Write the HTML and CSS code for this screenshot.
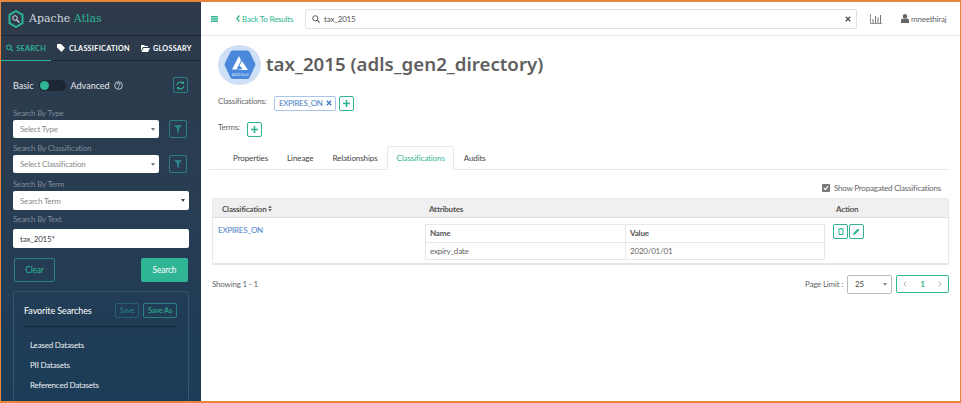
FILE: index.html
```html
<!DOCTYPE html>
<html lang="en">
<head>
    <meta charset="UTF-8">
    <title>Apache Atlas</title>
    <link rel="stylesheet" href="styles.css">
</head>
<body>
<div class="frame">
    <aside class="sidebar">
        <div class="brand">
            <svg class="brand-logo" width="16" height="18" viewBox="0 0 16 18">
                <path d="M8 1l6.500 3.800v8.400L8 17l-6.500-3.800V4.800z" fill="none" stroke="#2fb494" stroke-width="2"/>
                <circle cx="7" cy="8" r="2.300" fill="none" stroke="#d5e0e0" stroke-width="1"/>
                <path d="M8.500 10l3 2.500" stroke="#d5e0e0" stroke-width="1.200"/>
            </svg>
            <span class="brand-name">Apache <b>Atlas</b></span>
        </div>
        <nav class="side-tabs">
            <span class="side-tab active">
                <svg width="8" height="8" viewBox="0 0 8 8"><circle cx="3.300" cy="3.300" r="2.500" fill="none" stroke="#2fb494" stroke-width="1.100"/><path d="M5.200 5.200L7.600 7.600" stroke="#2fb494" stroke-width="1.200"/></svg>
                SEARCH
            </span>
            <span class="side-tab">
                <svg width="9" height="8" viewBox="0 0 9 8"><path d="M0 0h4l4 4-3.500 4L0 3.500z" fill="#fff"/></svg>
                CLASSIFICATION
            </span>
            <span class="side-tab">
                <svg width="9" height="8" viewBox="0 0 9 8"><path d="M0 1h3l1 1h3v1H2L0 7z M2.500 4H9L7 8H0.500z" fill="#fff"/></svg>
                GLOSSARY
            </span>
        </nav>

        <div class="side-body">
            <div class="mode-row">
                <span>Basic</span>
                <span class="switch"><span class="knob"></span></span>
                <span>Advanced</span>
                <svg width="9" height="9" viewBox="0 0 9 9"><circle cx="4.500" cy="4.500" r="3.800" fill="none" stroke="#e4e9ee" stroke-width="0.800"/><path d="M3.200 3.500a1.300 1.300 0 1 1 1.800 1.200c-.4.200-.5.400-.5.800" fill="none" stroke="#e4e9ee" stroke-width="0.800"/><circle cx="4.500" cy="6.700" r=".5" fill="#e4e9ee"/></svg>
                <button class="icon-btn refresh">
                    <svg width="9" height="9" viewBox="0 0 9 9"><path d="M1 4a3.500 3.500 0 0 1 6-1.800M8 5a3.500 3.500 0 0 1-6 1.800" fill="none" stroke="#2fb494" stroke-width="1.200"/><path d="M8 .6v2.400H5.600zM1 8.400V6h2.400z" fill="#2fb494"/></svg>
                </button>
            </div>

            <label class="field-label first">Search By Type</label>
            <div class="field-row">
                <div class="select short">Select Type<span class="caret"></span></div>
                <button class="icon-btn filter"><svg width="8" height="8" viewBox="0 0 8 8"><path d="M0 0h8L5 4v4L3 7V4z" fill="#2a7f85"/></svg></button>
            </div>

            <label class="field-label">Search By Classification</label>
            <div class="field-row">
                <div class="select short">Select Classification<span class="caret"></span></div>
                <button class="icon-btn filter"><svg width="8" height="8" viewBox="0 0 8 8"><path d="M0 0h8L5 4v4L3 7V4z" fill="#2a7f85"/></svg></button>
            </div>

            <label class="field-label term-label">Search By Term</label>
            <div class="select">Search Term<span class="caret dark"></span></div>

            <label class="field-label text-label">Search By Text</label>
            <div class="select filled">tax_2015*</div>

            <div class="action-row">
                <button class="btn-clear">Clear</button>
                <button class="btn-search">Search</button>
            </div>

            <section class="favorites">
                <div class="fav-head">
                    <span class="fav-title">Favorite Searches</span>
                    <button class="fav-btn dim">Save</button>
                    <button class="fav-btn wide">Save As</button>
                </div>
                <ul class="fav-list">
                    <li>Leased Datasets</li>
                    <li>PII Datasets</li>
                    <li>Referenced Datasets</li>
                </ul>
            </section>
        </div>
    </aside>

    <main class="content">
        <header class="topbar">
            <svg class="burger" width="7" height="6" viewBox="0 0 7 6"><path d="M0 0h7v1.400H0zM0 2.300h7v1.400H0zM0 4.600h7V6H0z" fill="#2fb494"/></svg>
            <a class="back">
                <svg width="4" height="7" viewBox="0 0 4 7"><path d="M3.500 .5L.8 3.500l2.700 3" fill="none" stroke="#2fb494" stroke-width="1.300"/></svg>
                Back To Results
            </a>
            <div class="global-search">
                <svg width="8" height="8" viewBox="0 0 8 8"><circle cx="3.300" cy="3.300" r="2.600" fill="none" stroke="#555" stroke-width="1"/><path d="M5.200 5.200L7.600 7.600" stroke="#555" stroke-width="1.100"/></svg>
                <span class="query">tax_2015</span>
                <svg width="6" height="6" viewBox="0 0 6 6"><path d="M.8.800l4.400 4.400M5.200.800L.8 5.200" stroke="#555" stroke-width="1.500"/></svg>
            </div>
            <svg class="chart" width="12" height="10" viewBox="0 0 12 10"><path d="M.5 0v9.500H12" fill="none" stroke="#777" stroke-width=".8"/><path d="M2.500 5h1v4h-1zM5 2h1v7H5zM7.500 3.500h1V9h-1zM10 1h1v8h-1z" fill="#777"/></svg>
            <span class="user">
                <svg width="8" height="9" viewBox="0 0 8 9"><circle cx="4" cy="2.200" r="2.200" fill="#666"/><path d="M0 9V6.500C0 5 1.300 4.500 2.300 4.500h3.400C6.700 4.500 8 5 8 6.500V9z" fill="#666"/></svg>
                mneethiraj
            </span>
        </header>

        <div class="detail">
            <div class="title-row">
                <span class="entity-icon">
                    <svg width="32" height="32" viewBox="0 0 32 32">
                        <path d="M9 1.500h14a3 3 0 0 1 2.600 1.500l5.400 11a3 3 0 0 1 0 3l-5.400 11.500a3 3 0 0 1-2.600 1.500H9a3 3 0 0 1-2.600-1.500L1 17a3 3 0 0 1 0-3L6.400 3A3 3 0 0 1 9 1.500z" fill="#4a88dc"/>
                        <path d="M15 7l-7 13.500h4.500L17 11.500zM18 12l-2.500 4.500 3 3.500-6 1H24z" fill="#fff"/>
                        <text x="16" y="27" font-size="3.600" fill="#dfeafa" text-anchor="middle">ADLS Gen2</text>
                    </svg>
                </span>
                <h1>tax_2015 (adls_gen2_directory)</h1>
            </div>

            <div class="meta-row classifications">
                <span class="meta-label">Classifications:</span>
                <span class="tag">EXPIRES_ON
                    <svg width="6" height="6" viewBox="0 0 6 6"><path d="M.8.800l4.400 4.400M5.200.800L.8 5.200" stroke="#4a80c4" stroke-width="1.500"/></svg>
                </span>
                <button class="plus"><svg width="7" height="7" viewBox="0 0 7 7"><path d="M2.700 0h1.600v2.700H7v1.600H4.300V7H2.700V4.300H0V2.700h2.700z" fill="#2fb494"/></svg></button>
            </div>
            <div class="meta-row terms">
                <span class="meta-label">Terms:</span>
                <button class="plus"><svg width="7" height="7" viewBox="0 0 7 7"><path d="M2.700 0h1.600v2.700H7v1.600H4.300V7H2.700V4.300H0V2.700h2.700z" fill="#2fb494"/></svg></button>
            </div>

            <div class="tabs">
                <span class="tab">Properties</span>
                <span class="tab">Lineage</span>
                <span class="tab">Relationships</span>
                <span class="tab active">Classifications</span>
                <span class="tab">Audits</span>
            </div>

            <div class="propagated">
                <span class="check"><svg width="6" height="6" viewBox="0 0 6 6"><path d="M.8 3l1.600 1.700L5.200 1.200" fill="none" stroke="#fff" stroke-width="1.200"/></svg></span>
                Show Propagated Classifications
            </div>

            <div class="panel">
                <div class="panel-head">
                    <span class="col-name">Classification
                        <svg width="4" height="7" viewBox="0 0 4 7"><path d="M2 .5L3.800 3H.2zM2 6.500L.2 4h3.600z" fill="#666"/></svg>
                    </span>
                    <span class="col-attr">Attributes</span>
                    <span class="col-action">Action</span>
                </div>
                <div class="panel-body">
                    <a class="link">EXPIRES_ON</a>
                    <table class="attrs">
                        <tr><th>Name</th><th>Value</th></tr>
                        <tr><td>expiry_date</td><td>2020/01/01</td></tr>
                    </table>
                    <div class="row-actions">
                        <button class="plus small"><svg width="6" height="7" viewBox="0 0 6 7"><path d="M0 1h6M1 1.500v5h4v-5M2.200 1V.3h1.600V1" fill="none" stroke="#2fb494" stroke-width="1"/></svg></button>
                        <button class="plus small"><svg width="7" height="7" viewBox="0 0 7 7"><path d="M0 7l.5-2L5 .5 6.500 2 2 6.500z" fill="#2fb494"/></svg></button>
                    </div>
                </div>
            </div>

            <div class="footer-row">
                <span class="showing">Showing 1 - 1</span>
                <span class="limit-label">Page Limit :</span>
                <div class="limit">25<span class="caret gray"></span></div>
                <div class="pager">
                    <svg width="4" height="6" viewBox="0 0 4 6"><path d="M3 .5L1 3l2 2.500" fill="none" stroke="#999" stroke-width=".8"/></svg>
                    <b>1</b>
                    <svg width="4" height="6" viewBox="0 0 4 6"><path d="M1 .5L3 3 1 5.500" fill="none" stroke="#999" stroke-width=".8"/></svg>
                </div>
            </div>
        </div>
    </main>
</div>
</body>
</html>
```

FILE: styles.css
```css
* {
    box-sizing: border-box;
}
html, body {
    margin: 0;
    height: 403px;
    overflow: hidden;
}
body {
    font-family: Lato, "Noto Sans", Arial, sans-serif;
    font-size: 8px;
    letter-spacing: -.2px;
    color: #666;
    background-color: #fff;
}
button {
    font-family: inherit;
    letter-spacing: inherit;
    padding: 0;
    background: none;
    cursor: pointer;
}
.frame {
    display: flex;
    width: 961px;
    height: 403px;
    border-style: solid;
    border-color: #e8853c;
    border-width: 2px 1px 2px 1px;
    overflow: hidden;
}

/* sidebar */
.sidebar {
    width: 200px;
    flex-shrink: 0;
    color: #e4e9ee;
    background: linear-gradient(180deg, #2e3a4a 0%, #283d52 50%, #1b3c58 100%);
}
.brand {
    display: flex;
    align-items: center;
    gap: 5px;
    height: 34px;
    padding-left: 7px;
    border-bottom: 1px solid #1d2633;
}
.brand-name {
    font-family: "DejaVu Serif", serif;
    font-size: 11px;
    letter-spacing: 0;
    color: #cfd6da;
}
.brand-name b {
    font-weight: 400;
    color: #2fb494;
}
.side-tabs {
    display: flex;
    height: 25px;
    border-bottom: 1px solid #1d2633;
}
.side-tab {
    display: flex;
    align-items: center;
    gap: 3px;
    padding: 0 5px 0 6px;
    font-size: 7.200px;
    font-weight: 700;
    letter-spacing: .3px;
    color: #fff;
    white-space: nowrap;
}
.side-tab.active {
    width: 50px;
    padding-left: 5px;
    color: #2fb494;
    border-bottom: 1px solid #2fb494;
    margin-bottom: -1px;
}
.side-body {
    padding: 16px 12px 0 12px;
}
.mode-row {
    display: flex;
    align-items: center;
    gap: 4px;
    height: 16px;
    font-size: 9px;
    letter-spacing: 0;
}
.switch {
    width: 27px;
    height: 11px;
    margin: 0 1px;
    padding: 1px;
    border-radius: 6px;
    background-color: #1d2633;
}
.knob {
    display: block;
    width: 9px;
    height: 9px;
    border-radius: 50%;
    background-color: #2fb494;
}
.icon-btn {
    display: flex;
    align-items: center;
    justify-content: center;
    border: 1px solid #2a7f85;
    border-radius: 2px;
}
.refresh {
    width: 15px;
    height: 16px;
    margin-left: auto;
    margin-right: 1px;
}
.filter {
    width: 18px;
    height: 18px;
    margin-right: 2px;
}
.field-label {
    display: block;
    height: 13px;
    margin-top: 4px;
    line-height: 12px;
    color: #7f8b98;
    white-space: nowrap;
}
.field-label.first {
    margin-top: 14px;
    height: 13px;
}
.field-label.term-label {
    margin-top: 5px;
}
.field-label.text-label {
    margin-top: 4px;
    height: 15px;
    line-height: 11px;
}
.field-row {
    display: flex;
    align-items: center;
    justify-content: space-between;
}
.select {
    display: flex;
    align-items: center;
    justify-content: space-between;
    width: 176px;
    height: 19px;
    padding: 0 4px 0 7px;
    color: #8a8a8a;
    background-color: #fff;
    border-radius: 2px;
}
.select.short {
    width: 146px;
    height: 18px;
}
.select.filled {
    color: #444;
}
.caret {
    width: 0;
    height: 0;
    border-left: 2.500px solid transparent;
    border-right: 2.500px solid transparent;
    border-top: 3px solid #777;
}
.caret.dark {
    border-top-color: #444;
}
.caret.gray {
    border-top-color: #888;
}
.action-row {
    display: flex;
    justify-content: space-between;
    margin: 10px 1px 0 1px;
}
.btn-clear, .btn-search {
    height: 24px;
    font-size: 8.500px;
    border-radius: 2px;
}
.btn-clear {
    width: 41px;
    color: #2fb494;
    border: 1px solid #2a7f85;
}
.btn-search {
    width: 47px;
    color: #fff;
    border: 0;
    background-color: #2fb494;
}
.favorites {
    width: 176px;
    height: 130px;
    margin-top: 9px;
    padding: 0 11px 0 10px;
    border: 1px solid #33566c;
    border-radius: 2px;
}
.fav-head {
    display: flex;
    align-items: center;
    gap: 4px;
    height: 35px;
    padding-top: 3px;
    border-bottom: 1px solid #15293b;
}
.fav-title {
    margin-right: auto;
    font-size: 9px;
    letter-spacing: -.1px;
    color: #fff;
}
.fav-btn {
    width: 24px;
    height: 15px;
    font-size: 7.500px;
    color: #2fb494;
    border: 1px solid #2a7f85;
    border-radius: 2px;
}
.fav-btn.wide {
    width: 34px;
}
.fav-btn.dim {
    color: #2a7f85;
    border-color: #2a5f70;
}
.fav-list {
    list-style: none;
    margin: 8px 0 0 0;
    padding: 0 0 0 6px;
    color: #eef2f5;
}
.fav-list li {
    height: 20px;
    line-height: 20px;
}

/* main */
.content {
    flex: 1;
    min-width: 0;
}
.topbar {
    display: flex;
    align-items: center;
    height: 34px;
    padding-left: 10px;
    border-bottom: 1px solid #e8e8e8;
}
.burger {
    margin-right: 18px;
}
.back {
    display: flex;
    align-items: center;
    gap: 2px;
    width: 69px;
    color: #2fb494;
    white-space: nowrap;
}
.global-search {
    display: flex;
    align-items: center;
    gap: 4px;
    width: 552px;
    height: 20px;
    padding: 0 5px 0 6px;
    border: 1px solid #e2e2e2;
    border-radius: 2px;
}
.query {
    flex: 1;
    color: #555;
}
.chart {
    margin-left: 13px;
}
.user {
    display: flex;
    align-items: center;
    gap: 2px;
    margin-left: 19px;
    color: #666;
}
.detail {
    padding: 0 11px 0 12px;
}
.title-row {
    display: flex;
    align-items: center;
    gap: 5px;
    height: 50px;
    margin-top: 4px;
    padding-left: 5px;
}
.entity-icon {
    display: flex;
    align-items: center;
    justify-content: center;
    width: 43px;
    height: 40px;
    border-radius: 50%;
    background-color: #cfe0f6;
}
h1 {
    margin: 0 0 4px 0;
    font-family: "Noto Sans", Arial, sans-serif;
    font-size: 18.700px;
    font-weight: 600;
    letter-spacing: 0;
    color: #5f5f5f;
    white-space: nowrap;
}
.meta-row {
    display: flex;
    align-items: center;
    padding-left: 5px;
}
.classifications {
    height: 16px;
    margin-top: 5px;
}
.terms {
    height: 16px;
    margin-top: 10px;
}
.meta-label {
    margin-top: -4px;
}
.classifications .meta-label {
    width: 56px;
}
.terms .meta-label {
    width: 29px;
}
.tag {
    display: flex;
    align-items: center;
    justify-content: space-between;
    width: 62px;
    height: 15px;
    margin-right: 3px;
    padding: 0 3px 0 4px;
    letter-spacing: -.35px;
    color: #4a80c4;
    border: 1px solid #a9c6ea;
    border-radius: 2px;
}
.plus {
    display: flex;
    align-items: center;
    justify-content: center;
    width: 15px;
    height: 15px;
    border: 1px solid #2fb494;
    border-radius: 2px;
}
.tabs {
    display: flex;
    height: 24px;
    margin-top: 9px;
    margin-left: -4px;
    padding-left: 14.500px;
    letter-spacing: -.1px;
    border-bottom: 1px solid #e8e8e8;
}
.tab {
    padding: 0 9.500px;
    line-height: 24px;
    color: #444;
}
.tab.active {
    height: 24px;
    padding: 0 8.500px;
    color: #2fb494;
    background-color: #fff;
    border: 1px solid #e8e8e8;
    border-bottom: 0;
    border-radius: 2px 2px 0 0;
    line-height: 23px;
}
.propagated {
    display: flex;
    align-items: center;
    justify-content: flex-end;
    gap: 4px;
    height: 28px;
    margin-left: -1px;
    padding-right: 8px;
    padding-top: 8px;
}
.check {
    display: flex;
    align-items: center;
    justify-content: center;
    width: 8px;
    height: 8px;
    border-radius: 1px;
    background-color: #777;
}
.panel {
    width: 737px;
    margin-left: -1px;
    border: 1px solid #e8e8e8;
    border-bottom: 2px solid #e4e4e4;
    border-radius: 2px;
}
.panel-head {
    display: flex;
    align-items: center;
    height: 19px;
    padding-top: 1px;
    font-weight: 700;
    color: #555;
    background-color: #f0f0f0;
    border-bottom: 1px solid #ddd;
}
.col-name {
    width: 216px;
    padding-left: 9px;
}
.col-attr {
    width: 407px;
}
.panel-body {
    display: flex;
    align-items: flex-start;
    height: 45px;
    padding-top: 6px;
}
.link {
    width: 212px;
    padding: 1px 0 0 5px;
    color: #4a80c4;
}
.attrs {
    width: 400px;
    height: 36px;
    border-collapse: collapse;
}
.attrs th, .attrs td {
    padding: 0 4px;
    text-align: left;
    border: 1px solid #e8e8e8;
}
.attrs th {
    color: #555;
}
.attrs th:first-child, .attrs td:first-child {
    width: 200px;
}
.row-actions {
    display: flex;
    gap: 1px;
    margin-left: 8px;
}
.footer-row {
    display: flex;
    align-items: center;
    height: 20px;
    width: 737px;
    margin-left: -1px;
    margin-top: 9px;
}
.limit-label {
    margin-left: auto;
    margin-right: 4px;
}
.limit {
    display: flex;
    align-items: center;
    justify-content: space-between;
    width: 45px;
    height: 19px;
    padding: 0 4px 0 7px;
    color: #444;
    border: 1px solid #bbb;
    border-radius: 2px;
}
.pager {
    display: flex;
    align-items: center;
    justify-content: space-around;
    width: 53px;
    height: 18px;
    margin-left: 4px;
    border: 1px solid #2fb494;
    border-radius: 2px;
}
.pager b {
    color: #2fb494;
}
```
